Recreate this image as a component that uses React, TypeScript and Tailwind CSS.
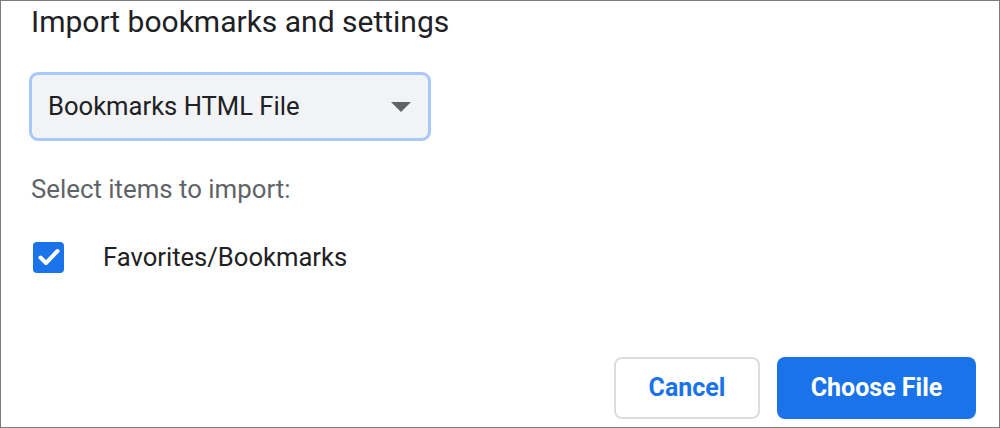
export default function App() {
  return (
    <div
      className="flex h-[428px] w-[1000px] flex-col border border-[#7b7b7b] bg-white text-[#202124]"
      style={{ fontFamily: 'Roboto, "Liberation Sans", sans-serif' }}
    >
      <div className="pl-[30px]">
        <h1 className="mt-[3px] text-[30px] leading-[36px] font-normal">Import bookmarks and settings</h1>

        {/* Dropdown */}
        <div className="mt-[32px] -ml-[2px] flex h-[69px] w-[402px] items-center justify-between rounded-[9px] border-[3px] border-[#a8c7fa] bg-[#f1f3f4] pr-[17px] pl-[16px]">
          <span className="text-[25.6px]">Bookmarks HTML File</span>
          <svg width="20" height="10" viewBox="0 0 20 10">
            <path d="M0 0 L20 0 L10 10 Z" fill="#5f6368" />
          </svg>
        </div>

        <p className="mt-[33px] text-[25.8px] leading-[30px] text-[#5f6368]">Select items to import:</p>

        {/* Checkbox row */}
        <div className="mt-[34px] flex items-center">
          <span className="ml-[2px] flex h-[31px] w-[31px] items-center justify-center rounded-[4px] bg-[#1a73e8]">
            <svg width="24" height="20" viewBox="0 0 24 20">
              <path d="M3.5 10.5 L9 16 L20.5 4" fill="none" stroke="white" strokeWidth="4" strokeLinecap="round" strokeLinejoin="round" />
            </svg>
          </span>
          <span className="ml-[39px] text-[25.6px]">Favorites/Bookmarks</span>
        </div>
      </div>

      {/* Actions */}
      <div className="mt-auto mr-[23px] mb-[8px] flex justify-end gap-[17px]">
        <button
          type="button"
          className="h-[62px] w-[146px] rounded-[8px] border-2 border-[#dadce0] bg-white text-[25px] font-bold text-[#1a73e8]"
        >
          Cancel
        </button>
        <button
          type="button"
          className="h-[62px] w-[199px] rounded-[8px] bg-[#1a73e8] text-[25px] font-bold text-white"
        >
          Choose File
        </button>
      </div>
    </div>
  );
}
